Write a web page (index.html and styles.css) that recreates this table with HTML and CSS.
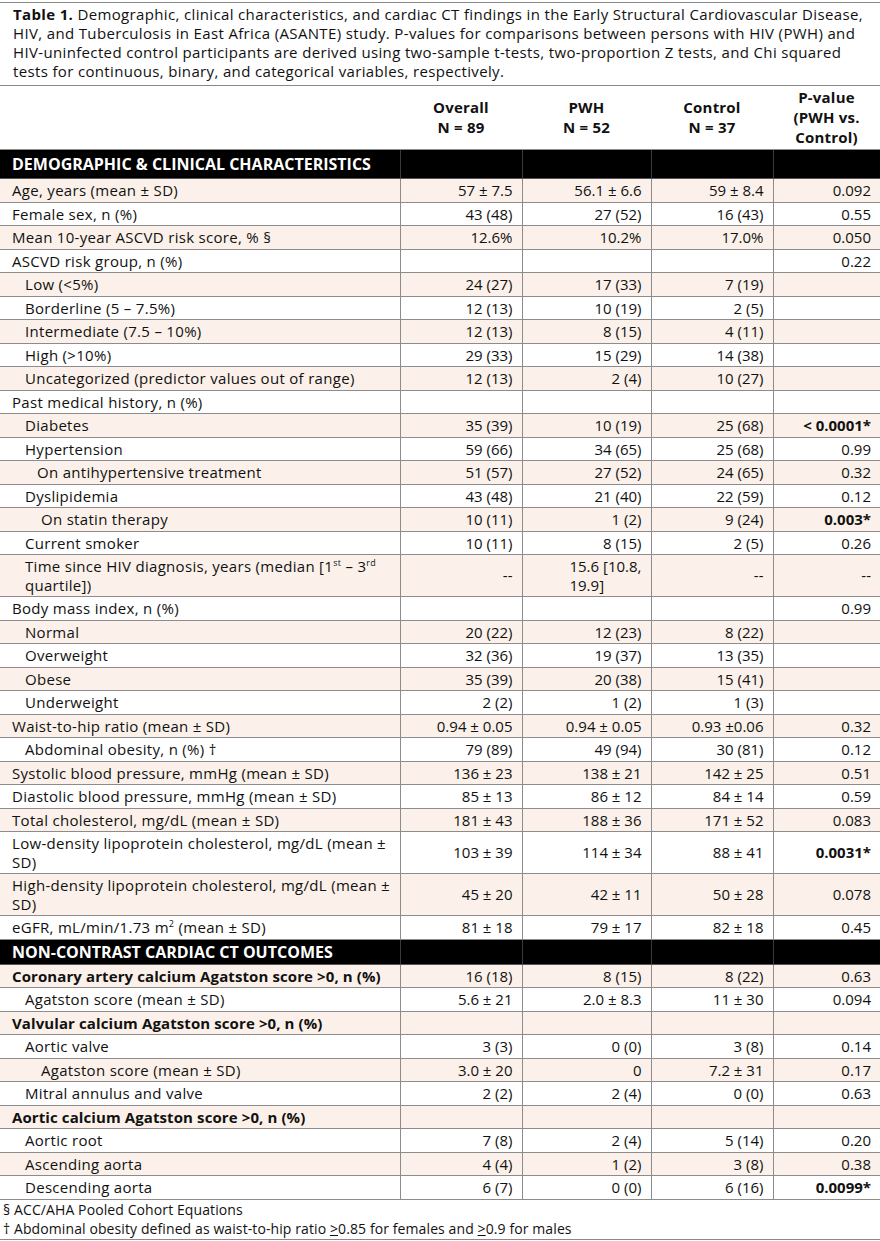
FILE: index.html
```html
<!DOCTYPE html>
<html>
<head>
<meta charset="utf-8">
<link rel="stylesheet" href="styles.css">
</head>
<body>
<div class="page">
  <p class="caption"><b>Table 1.</b> Demographic, clinical characteristics, and cardiac CT findings in the Early Structural Cardiovascular Disease, HIV, and Tuberculosis in East Africa (ASANTE) study. P-values for comparisons between persons with HIV (PWH) and HIV-uninfected control participants are derived using two-sample t-tests, two-proportion Z tests, and Chi squared tests for continuous, binary, and categorical variables, respectively.</p>
  <table class="data">
    <colgroup>
      <col class="c-label"><col class="c-ov"><col class="c-pwh"><col class="c-ctl"><col class="c-p">
    </colgroup>
    <thead>
      <tr class="head">
        <th></th>
        <th>Overall<br>N = 89</th>
        <th>PWH<br>N = 52</th>
        <th>Control<br>N = 37</th>
        <th>P-value<br>(PWH vs.<br>Control)</th>
      </tr>
    </thead>
    <tbody>
      <tr class="section first"><td>DEMOGRAPHIC &amp; CLINICAL CHARACTERISTICS</td><td></td><td></td><td></td><td></td></tr>
      <tr class="alt"><td>Age, years (mean ± SD)</td><td>57 ± 7.5</td><td>56.1 ± 6.6</td><td>59 ± 8.4</td><td>0.092</td></tr>
      <tr><td>Female sex, n (%)</td><td>43 (48)</td><td>27 (52)</td><td>16 (43)</td><td>0.55</td></tr>
      <tr class="alt"><td>Mean 10-year ASCVD risk score, % §</td><td>12.6%</td><td>10.2%</td><td>17.0%</td><td>0.050</td></tr>
      <tr><td>ASCVD risk group, n (%)</td><td></td><td></td><td></td><td>0.22</td></tr>
      <tr class="alt"><td class="i1">Low (&lt;5%)</td><td>24 (27)</td><td>17 (33)</td><td>7 (19)</td><td></td></tr>
      <tr><td class="i1">Borderline (5 – 7.5%)</td><td>12 (13)</td><td>10 (19)</td><td>2 (5)</td><td></td></tr>
      <tr class="alt"><td class="i1">Intermediate (7.5 – 10%)</td><td>12 (13)</td><td>8 (15)</td><td>4 (11)</td><td></td></tr>
      <tr><td class="i1">High (&gt;10%)</td><td>29 (33)</td><td>15 (29)</td><td>14 (38)</td><td></td></tr>
      <tr class="alt"><td class="i1">Uncategorized (predictor values out of range)</td><td>12 (13)</td><td>2 (4)</td><td>10 (27)</td><td></td></tr>
      <tr><td>Past medical history, n (%)</td><td></td><td></td><td></td><td></td></tr>
      <tr class="alt"><td class="i1">Diabetes</td><td>35 (39)</td><td>10 (19)</td><td>25 (68)</td><td class="sig">&lt; 0.0001*</td></tr>
      <tr><td class="i1">Hypertension</td><td>59 (66)</td><td>34 (65)</td><td>25 (68)</td><td>0.99</td></tr>
      <tr class="alt"><td class="i2">On antihypertensive treatment</td><td>51 (57)</td><td>27 (52)</td><td>24 (65)</td><td>0.32</td></tr>
      <tr><td class="i1">Dyslipidemia</td><td>43 (48)</td><td>21 (40)</td><td>22 (59)</td><td>0.12</td></tr>
      <tr class="alt"><td class="i3">On statin therapy</td><td>10 (11)</td><td>1 (2)</td><td>9 (24)</td><td class="sig">0.003*</td></tr>
      <tr><td class="i1">Current smoker</td><td>10 (11)</td><td>8 (15)</td><td>2 (5)</td><td>0.26</td></tr>
      <tr class="alt"><td class="i1">Time since HIV diagnosis, years (median [1<sup>st</sup> – 3<sup>rd</sup> quartile])</td><td class="mid">--</td><td><span class="block">15.6 [10.8,<br>19.9]</span></td><td class="mid">--</td><td>--</td></tr>
      <tr><td>Body mass index, n (%)</td><td></td><td></td><td></td><td>0.99</td></tr>
      <tr class="alt"><td class="i1">Normal</td><td>20 (22)</td><td>12 (23)</td><td>8 (22)</td><td></td></tr>
      <tr><td class="i1">Overweight</td><td>32 (36)</td><td>19 (37)</td><td>13 (35)</td><td></td></tr>
      <tr class="alt"><td class="i1">Obese</td><td>35 (39)</td><td>20 (38)</td><td>15 (41)</td><td></td></tr>
      <tr><td class="i1">Underweight</td><td>2 (2)</td><td>1 (2)</td><td>1 (3)</td><td></td></tr>
      <tr class="alt"><td>Waist-to-hip ratio (mean ± SD)</td><td>0.94 ± 0.05</td><td>0.94 ± 0.05</td><td>0.93 ±0.06</td><td>0.32</td></tr>
      <tr><td class="i1">Abdominal obesity, n (%) †</td><td>79 (89)</td><td>49 (94)</td><td>30 (81)</td><td>0.12</td></tr>
      <tr class="alt"><td>Systolic blood pressure, mmHg (mean ± SD)</td><td>136 ± 23</td><td>138 ± 21</td><td>142 ± 25</td><td>0.51</td></tr>
      <tr><td>Diastolic blood pressure, mmHg (mean ± SD)</td><td>85 ± 13</td><td>86 ± 12</td><td>84 ± 14</td><td>0.59</td></tr>
      <tr class="alt"><td>Total cholesterol, mg/dL (mean ± SD)</td><td>181 ± 43</td><td>188 ± 36</td><td>171 ± 52</td><td>0.083</td></tr>
      <tr><td>Low-density lipoprotein cholesterol, mg/dL (mean ± SD)</td><td>103 ± 39</td><td>114 ± 34</td><td>88 ± 41</td><td class="sig">0.0031*</td></tr>
      <tr class="alt"><td>High-density lipoprotein cholesterol, mg/dL (mean ± SD)</td><td>45 ± 20</td><td>42 ± 11</td><td>50 ± 28</td><td>0.078</td></tr>
      <tr><td>eGFR, mL/min/1.73 m<sup>2</sup> (mean ± SD)</td><td>81 ± 18</td><td>79 ± 17</td><td>82 ± 18</td><td>0.45</td></tr>
      <tr class="section"><td>NON-CONTRAST CARDIAC CT OUTCOMES</td><td></td><td></td><td></td><td></td></tr>
      <tr class="alt"><td class="b">Coronary artery calcium Agatston score &gt;0, n (%)</td><td>16 (18)</td><td>8 (15)</td><td>8 (22)</td><td>0.63</td></tr>
      <tr><td class="i1">Agatston score (mean ± SD)</td><td>5.6 ± 21</td><td>2.0 ± 8.3</td><td>11 ± 30</td><td>0.094</td></tr>
      <tr class="alt"><td class="b">Valvular calcium Agatston score &gt;0, n (%)</td><td></td><td></td><td></td><td></td></tr>
      <tr><td class="i1">Aortic valve</td><td>3 (3)</td><td>0 (0)</td><td>3 (8)</td><td>0.14</td></tr>
      <tr class="alt"><td class="i3">Agatston score (mean ± SD)</td><td>3.0 ± 20</td><td>0</td><td>7.2 ± 31</td><td>0.17</td></tr>
      <tr><td class="i1">Mitral annulus and valve</td><td>2 (2)</td><td>2 (4)</td><td>0 (0)</td><td>0.63</td></tr>
      <tr class="alt"><td class="b">Aortic calcium Agatston score &gt;0, n (%)</td><td></td><td></td><td></td><td></td></tr>
      <tr><td class="i1">Aortic root</td><td>7 (8)</td><td>2 (4)</td><td>5 (14)</td><td>0.20</td></tr>
      <tr class="alt"><td class="i1">Ascending aorta</td><td>4 (4)</td><td>1 (2)</td><td>3 (8)</td><td>0.38</td></tr>
      <tr><td class="i1">Descending aorta</td><td>6 (7)</td><td>0 (0)</td><td>6 (16)</td><td class="sig">0.0099*</td></tr>
    </tbody>
  </table>
  <div class="notes">
    <p>§ ACC/AHA Pooled Cohort Equations</p>
    <p>† Abdominal obesity defined as waist-to-hip ratio <u>&gt;</u>0.85 for females and <u>&gt;</u>0.9 for males</p>
  </div>
</div>
</body>
</html>
```

FILE: styles.css
```css
html, body {
  margin: 0;
  padding: 0;
  background: #ffffff;
}

.page {
  width: 880px;
  padding-top: 2px;
  font-family: "Open Sans", "Liberation Sans", Arial, sans-serif;
  color: #111111;
}

.caption {
  margin: 0;
  padding: 2px 8px 4px 13px;
  font-size: 15px;
  line-height: 19px;
  letter-spacing: 0.35px;
  border-top: 1.5px solid #8a8a8a;
  border-bottom: 1.5px solid #8a8a8a;
}

.data {
  width: 880px;
  border-collapse: collapse;
  table-layout: fixed;
  font-size: 15px;
}

.c-label { width: 400px; }
.c-ov { width: 122px; }
.c-pwh { width: 129px; }
.c-ctl { width: 122px; }
.c-p { width: 107px; }

.head th {
  font-weight: bold;
  text-align: center;
  line-height: 20px;
  padding: 1px 4px 2px;
  vertical-align: middle;
  letter-spacing: 0.2px;
}

.data td {
  padding: 2px 9px 2px 12px;
  line-height: 18.5px;
  text-align: right;
  vertical-align: middle;
  border-bottom: 1px solid #8c8c8c;
  border-left: 1px solid #8c8c8c;
}

.data td:first-child {
  text-align: left;
  border-left: none;
  letter-spacing: 0.3px;
}

.data tr.alt td {
  background: #fbf1ea;
}

.data tr.section td {
  background: #000000;
  color: #ffffff;
  font-weight: bold;
  font-size: 16px;
  letter-spacing: 0;
  line-height: 19px;
  padding-top: 3px;
  padding-bottom: 2px;
  border-left-color: #3a3a3a;
  border-bottom: 1px solid #555555;
}

.data tr.section.first td {
  padding-top: 5px;
  padding-bottom: 4px;
  border-top: 1px solid #8c8c8c;
}

.data td.i1 { padding-left: 25px; }
.data td.i2 { padding-left: 37px; }
.data td.i3 { padding-left: 41px; }
.data td.b { font-weight: bold; letter-spacing: 0.1px; }
.data td.sig { font-weight: bold; }

.block {
  display: inline-block;
  text-align: left;
}

sup {
  font-size: 9px;
  line-height: 0;
}

.notes {
  border-bottom: 1.5px solid #8a8a8a;
  padding: 0 0 1px 3px;
  font-size: 14px;
  line-height: 19px;
  letter-spacing: 0.1px;
}

.notes p {
  margin: 0;
}
```
